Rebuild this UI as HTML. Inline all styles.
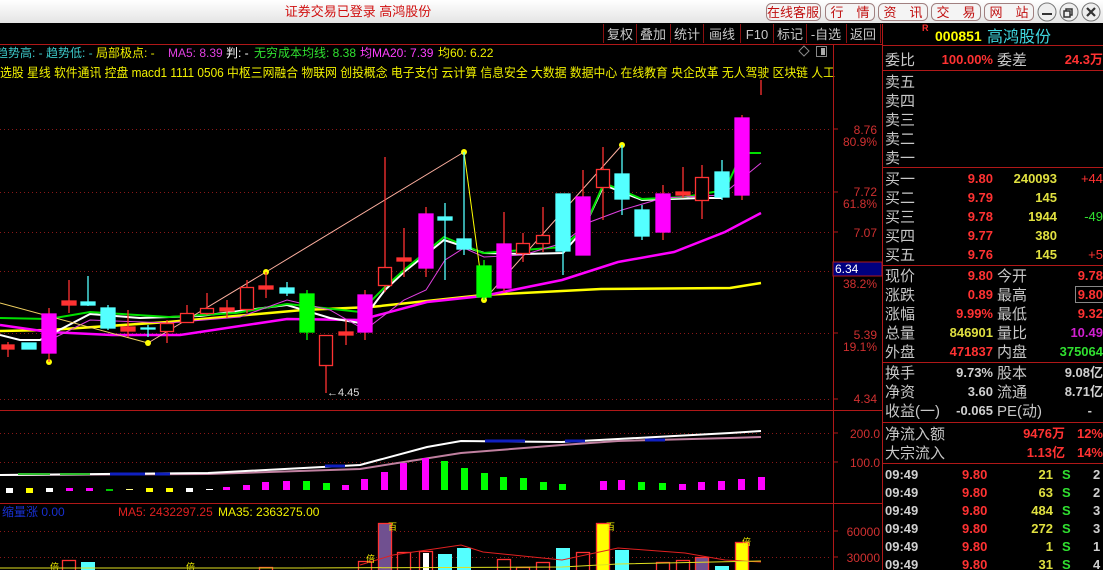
<!DOCTYPE html>
<html><head><meta charset="utf-8"><style>
html,body{margin:0;padding:0;background:#000;width:1103px;height:570px;overflow:hidden}
svg{display:block}
text{font-family:"Liberation Sans","Noto Sans CJK SC",sans-serif}
.cn{font-family:"Liberation Sans","Noto Sans CJK SC",sans-serif;font-size:15px}
.n{font-family:"Liberation Sans","Noto Sans CJK SC",sans-serif;font-size:13px;font-weight:bold}
</style></head><body>
<svg width="1103" height="570" viewBox="0 0 1103 570" xmlns="http://www.w3.org/2000/svg">
<defs>
<linearGradient id="tb" x1="0" y1="0" x2="0" y2="1"><stop offset="0" stop-color="#ffffff"/><stop offset="1" stop-color="#e4e4e4"/></linearGradient>
</defs>
<rect width="1103" height="570" fill="#000"/>
<!-- title bar -->
<rect x="0" y="0" width="1103" height="23" fill="url(#tb)"/>
<text x="358" y="16" text-anchor="middle" fill="#d01010" font-size="13">证券交易已登录 高鸿股份</text>
<g font-size="13" fill="#c01010" stroke-width="1">
<rect x="766.5" y="3.5" width="54" height="17" rx="5" fill="#f4f4f4" stroke="#a08080"/><text x="793" y="17" text-anchor="middle">在线客服</text>
<rect x="825.5" y="3.5" width="49" height="17" rx="5" fill="#f4f4f4" stroke="#a08080"/><text x="850" y="17" text-anchor="middle">行　情</text>
<rect x="878.5" y="3.5" width="49" height="17" rx="5" fill="#f4f4f4" stroke="#a08080"/><text x="903" y="17" text-anchor="middle">资　讯</text>
<rect x="931.5" y="3.5" width="49" height="17" rx="5" fill="#f4f4f4" stroke="#a08080"/><text x="956" y="17" text-anchor="middle">交　易</text>
<rect x="984.5" y="3.5" width="49" height="17" rx="5" fill="#f4f4f4" stroke="#a08080"/><text x="1009" y="17" text-anchor="middle">网　站</text>
</g>
<g fill="#eee" stroke="#777">
<circle cx="1047" cy="12" r="9"/><circle cx="1069" cy="12" r="9"/><circle cx="1091" cy="12" r="9"/>
</g>
<path d="M1042 14h10" stroke="#333" stroke-width="2"/>
<rect x="1066" y="9" width="6" height="6" fill="none" stroke="#333" stroke-width="1.5"/><rect x="1064" y="11" width="6" height="6" fill="#eee" stroke="#333" stroke-width="1.5"/>
<path d="M1087 8l8 8M1095 8l-8 8" stroke="#333" stroke-width="2.2"/>

<!-- toolbar -->
<g stroke="#8a1010" fill="none">
<path d="M603.5 24v19M636.5 24v19M670.5 24v19M703.5 24v19M740.5 24v19M773.5 24v19M806.5 24v19M846.5 24v19M880.5 24v19"/>
</g>
<g fill="#c8c8c8" font-size="13" text-anchor="middle">
<text x="620" y="39">复权</text><text x="653" y="39">叠加</text><text x="687" y="39">统计</text><text x="722" y="39">画线</text><text x="757" y="39">F10</text><text x="790" y="39">标记</text><text x="826" y="39">-自选</text><text x="863" y="39">返回</text>
</g>
<path d="M0 44.5H882" stroke="#b01818"/>
<!-- diamond/square icons -->
<path d="M804 46l5 5-5 5-5-5z" fill="none" stroke="#888"/>
<rect x="816.5" y="46.5" width="10" height="10" fill="none" stroke="#888"/><rect x="821" y="48" width="4" height="7" fill="#aaa"/>

<!-- indicator text -->
<g font-size="12">
<text x="-4" y="57" fill="#3cc8c8">趋势高: -</text>
<text x="46" y="57" fill="#3cc8c8">趋势低: -</text>
<text x="96" y="57" fill="#f0f000">局部极点: -</text>
<text x="168" y="57" fill="#e040e0">MA5: 8.39</text>
<text x="226" y="57" fill="#ffffff">判: -</text>
<text x="254" y="57" fill="#30e030">无穷成本均线: 8.38</text>
<text x="360" y="57" fill="#ff40ff">均MA20: 7.39</text>
<text x="438" y="57" fill="#f0f000">均60: 6.22</text>
</g>
<text x="0" y="77" fill="#f0f000" font-size="12.5" textLength="835" lengthAdjust="spacingAndGlyphs">选股 星线 软件通讯 控盘 macd1 1111 0506 中枢三网融合 物联网 创投概念 电子支付 云计算 信息安全 大数据 数据中心 在线教育 央企改革 无人驾驶 区块链 人工</text>

<!-- axis -->
<path d="M833.5 45V570M882.5 24V570" stroke="#b01818"/>
<g stroke="#8a1818" stroke-dasharray="1,3">
<path d="M0 129.5H832M0 192.5H832M0 232.5H832M0 271.5H832M0 333.5H832M0 399.5H832"/>
<path d="M0 433.5H832M0 462.5H832M0 531.5H832M0 557.5H832"/>
</g>
<path d="M0 410.5H882M0 503.5H882" stroke="#b01818"/>
<g stroke="#b01818"><path d="M833 129h5M833 192h5M833 232h5M833 333h5M833 399h5M833 433h5M833 462h5M833 531h5M833 557h5"/></g>
<g fill="#d03030" font-size="12" text-anchor="end">
<text x="877" y="134">8.76</text><text x="877" y="146">80.9%</text>
<text x="877" y="196">7.72</text><text x="877" y="208">61.8%</text>
<text x="877" y="237">7.07</text>
<text x="877" y="288">38.2%</text>
<text x="877" y="339">5.39</text><text x="877" y="351">19.1%</text>
<text x="877" y="403">4.34</text>
<text x="880" y="438">200.0</text><text x="880" y="467">100.0</text>
<text x="880" y="536">60000</text><text x="880" y="562">30000</text>
</g>
<rect x="833" y="262" width="49" height="14" fill="#000080" stroke="#b01818"/>
<text x="835" y="273" fill="#fff" font-size="12">6.34</text>

<!-- MA lines -->
<polyline fill="none" stroke="#ffff00" stroke-width="2.5" points="0,331 49,330 168,322 303,310 371,307 483,295 601,289 730,288 761,283"/>
<polyline fill="none" stroke="#ff00ff" stroke-width="2.5" points="0,325 49,332 112,335 180,335 287,319 360,320 427,302 483,296 562,280 618,262 674,252 725,232 761,213"/>
<polyline fill="none" stroke="#ffffff" stroke-width="2" points="0,335 20,340 40,340 90,314 140,318 200,316 287,305 330,318 360,323 385,290 404,272 444,240 484,253 523,254 563,253 583,230 604,185 642,200 702,198 722,198"/>
<polyline fill="none" stroke="#00e000" stroke-width="2" points="0,318 49,319 90,312 169,317 236,313 287,304 360,312 385,287 404,270 444,237 483,253 563,247 584,228 604,183 642,199 685,197 725,190 742,153 761,153"/>
<polyline fill="none" stroke="#e040e0" stroke-width="1" points="50,340 90,320 168,323 240,317 287,300 330,310 365,330 404,300 426,290 445,260 464,248 484,257 523,255 563,243 590,222 622,210 663,198 722,195 761,163"/>
<polyline fill="none" stroke="#f0d060" stroke-width="1" points="0,303 148,343"/>
<polyline fill="none" stroke="#ffb0a0" stroke-width="1" points="148,343 266,272 464,152"/>
<polyline fill="none" stroke="#ffff00" stroke-width="1" points="464,152 484,300"/>
<polyline fill="none" stroke="#ffb0a0" stroke-width="1" points="484,300 622,145"/>
<g fill="#ffff00"><circle cx="49" cy="362" r="3"/><circle cx="148" cy="343" r="3"/><circle cx="266" cy="272" r="3"/><circle cx="464" cy="152" r="3"/><circle cx="484" cy="300" r="3"/><circle cx="622" cy="145" r="3"/></g>

<!-- candles -->
<g stroke-width="1.3">
<g stroke="#ff3232">
<path d="M8 342V357M69 280V313M128 310V337M167 320V343M187 305V323M207 293V315M227 300V318M247 280V313M266 272V298M326 365V393M346 320V345M385 157V292M404 228V277M523 233V262M543 207V252M603 147V220M683 167V198M702 165V219M761 80V95"/>
<rect x="2" y="345" width="12" height="4" fill="#ff3232"/>
<rect x="62" y="301" width="14" height="4" fill="#ff3232"/>
<rect x="121" y="327" width="14" height="4" fill="#ff3232"/>
<rect x="160.5" y="323.5" width="13" height="8" fill="#000"/>
<rect x="180.5" y="313.5" width="13" height="9" fill="#000"/>
<rect x="200.5" y="308.5" width="13" height="5" fill="#000"/>
<rect x="220" y="308" width="14" height="3" fill="#ff3232"/>
<rect x="240.5" y="287.5" width="13" height="22" fill="#000"/>
<rect x="259" y="286" width="14" height="3" fill="#ff3232"/>
<rect x="319.5" y="335.5" width="13" height="30" fill="#000"/>
<rect x="339" y="332" width="14" height="3" fill="#ff3232"/>
<rect x="378.5" y="267.5" width="13" height="18" fill="#000"/>
<rect x="397" y="258" width="14" height="3" fill="#ff3232"/>
<rect x="516.5" y="243.5" width="13" height="10" fill="#000"/>
<rect x="536.5" y="235.5" width="13" height="8" fill="#000"/>
<rect x="596.5" y="169.5" width="13" height="18" fill="#000"/>
<rect x="676" y="192" width="14" height="3" fill="#ff3232"/>
<rect x="695.5" y="177.5" width="13" height="23" fill="#000"/>
</g>
<g stroke="#54ffff" fill="#54ffff">
<path d="M88 276V306M108 305V330M148 325V337M287 282V296M445 203V280M464 152V255M563 194V275M622 145V215M642 205V240M722 160V200"/>
<rect x="22" y="343" width="14" height="6"/>
<rect x="81" y="302" width="14" height="3"/>
<rect x="101" y="308" width="14" height="20"/>
<rect x="141" y="328" width="14" height="1"/>
<rect x="280" y="288" width="14" height="5"/>
<rect x="438" y="217" width="14" height="3"/>
<rect x="457" y="239" width="14" height="10"/>
<rect x="556" y="194" width="14" height="57"/>
<rect x="615" y="174" width="14" height="25"/>
<rect x="635" y="210" width="14" height="26"/>
<rect x="715" y="172" width="14" height="25"/>
</g>
<g stroke="#ff3232">
<path d="M49 308V362M365 290V340M426 207V277M504 212V292M583 170V255M663 185V240M742 115V200"/>
</g>
<g fill="#ff00ff" stroke="#ff00ff">
<rect x="42" y="314" width="14" height="39"/>
<rect x="358" y="295" width="14" height="37"/>
<rect x="419" y="214" width="14" height="54"/>
<rect x="497" y="244" width="14" height="44"/>
<rect x="576" y="197" width="14" height="58"/>
<rect x="656" y="194" width="14" height="38"/>
<rect x="735" y="118" width="14" height="77"/>
</g>
<g fill="#00ff00" stroke="#00ff00">
<path d="M307 290V340M484 260V300" />
<rect x="300" y="294" width="14" height="38"/>
<rect x="477" y="266" width="14" height="31"/>
</g>
</g>
<text x="327" y="396" fill="#ddd" font-size="11">←4.45</text>

<!-- MACD panel -->
<polyline fill="none" stroke="#c080a0" stroke-width="2" points="0,475 208,474 360,469 461,453 562,445 618,441 730,438 761,437"/>
<polyline fill="none" stroke="#ffffff" stroke-width="2" points="0,475 208,473 360,465 427,447 461,441 562,442 618,439 730,433 761,431"/>
<path d="M18 474H50M60 474H90" stroke="#30c030" stroke-width="2"/>
<path d="M110 474H145M155 474H170M325 466H345M485 441H525M565 441H585M645 440H665" stroke="#1020c0" stroke-width="3"/>
<g>
<rect x="6" y="488" width="7" height="5" fill="#fff"/><rect x="26" y="488" width="7" height="5" fill="#ff0"/><rect x="46" y="488" width="7" height="4" fill="#fff"/>
<rect x="66" y="488" width="7" height="3" fill="#f0f"/><rect x="86" y="488" width="7" height="3" fill="#f0f"/><rect x="106" y="489" width="7" height="2" fill="#0c0"/>
<rect x="126" y="489" width="7" height="1" fill="#ff8"/><rect x="146" y="488" width="7" height="4" fill="#ff0"/><rect x="166" y="488" width="7" height="4" fill="#ff0"/>
<rect x="186" y="488" width="7" height="4" fill="#fff"/><rect x="206" y="489" width="7" height="1" fill="#fff"/>
</g>
<g fill="#ff00ff">
<rect x="223" y="487" width="7" height="3"/><rect x="243" y="485" width="7" height="5"/><rect x="262" y="482" width="7" height="8"/><rect x="283" y="481" width="7" height="9"/>
<rect x="342" y="485" width="7" height="5"/><rect x="361" y="479" width="7" height="11"/><rect x="381" y="472" width="7" height="18"/><rect x="400" y="463" width="7" height="27"/><rect x="422" y="458" width="7" height="32"/>
<rect x="600" y="481" width="7" height="9"/><rect x="618" y="480" width="7" height="10"/><rect x="679" y="484" width="7" height="6"/><rect x="698" y="482" width="7" height="8"/><rect x="718" y="481" width="7" height="9"/><rect x="738" y="479" width="7" height="11"/><rect x="758" y="477" width="7" height="13"/>
</g>
<g fill="#00ff00">
<rect x="303" y="481" width="7" height="9"/><rect x="323" y="483" width="7" height="7"/>
<rect x="441" y="461" width="7" height="29"/><rect x="461" y="468" width="7" height="22"/><rect x="481" y="473" width="7" height="17"/><rect x="500" y="477" width="7" height="13"/><rect x="520" y="478" width="7" height="12"/><rect x="540" y="482" width="7" height="8"/><rect x="559" y="484" width="7" height="6"/><rect x="638" y="482" width="7" height="8"/><rect x="659" y="483" width="7" height="7"/>
</g>

<!-- volume panel -->
<text x="2" y="516" fill="#1830d0" font-size="12">缩量涨 0.00</text>
<text x="118" y="516" fill="#e02020" font-size="12">MA5: 2432297.25</text>
<text x="218" y="516" fill="#f0f000" font-size="12">MA35: 2363275.00</text>
<g stroke="#ff3232" stroke-width="1.3" fill="#000">
<rect x="62.5" y="560.5" width="13" height="12"/>
<rect x="259.5" y="567.5" width="13" height="10"/>
<rect x="358.5" y="561.5" width="13" height="12"/>
<rect x="378.5" y="523.5" width="13" height="50" fill="#705090"/>
<rect x="397.5" y="552.5" width="13" height="20"/>
<rect x="419.5" y="551.5" width="13" height="20"/>
<rect x="497.5" y="559.5" width="13" height="20"/>
<rect x="516.5" y="567.5" width="13" height="20"/>
<rect x="536.5" y="562.5" width="13" height="20"/>
<rect x="576.5" y="552.5" width="13" height="20"/>
<rect x="596.5" y="523.5" width="13" height="50" fill="#ffff00"/>
<rect x="656.5" y="562.5" width="13" height="20"/>
<rect x="676.5" y="560.5" width="13" height="20"/>
<rect x="695.5" y="557.5" width="13" height="20" fill="#705090"/>
<rect x="735.5" y="542.5" width="13" height="30" fill="#ffff00"/>
</g>
<rect x="423" y="553" width="6" height="20" fill="#fff"/>
<g fill="#54ffff">
<rect x="81" y="562" width="14" height="10"/><rect x="438" y="554" width="14" height="20"/><rect x="457" y="548" width="14" height="25"/><rect x="556" y="548" width="14" height="25"/><rect x="615" y="550" width="14" height="25"/><rect x="715" y="566" width="14" height="10"/>
</g>
<polyline fill="none" stroke="#e02020" stroke-width="1" points="360,565 393,555 461,545 483,552 562,560 618,548 685,553 725,560 761,562"/>
<polyline fill="none" stroke="#e0e020" stroke-width="1" points="0,568 300,568 562,567 618,564 761,561"/>
<g fill="#f0f000" font-size="9"><text x="388" y="530">百</text><text x="606" y="530">百</text><text x="742" y="545">倍</text><text x="366" y="562">倍</text><text x="50" y="570">倍</text><text x="186" y="570">倍</text></g>

<!-- right panel -->
<text x="922" y="31" fill="#ff3030" font-size="9" font-weight="bold">R</text>
<text x="935" y="41" fill="#ffff00" font-size="14" font-weight="bold">000851</text>
<text x="987" y="42" fill="#40d8e0" font-size="16">高鸿股份</text>
<g stroke="#b01818"><path d="M882 45.5H1103M882 70.5H1103M882 167.5H1103M882 265.5H1103M882 362.5H1103M882 422.5H1103M882 463.5H1103"/></g>
<g class="cn" fill="#c8c8c8">
<text x="885" y="65">委比</text><text x="997" y="65">委差</text>
<text x="885" y="87">卖五</text><text x="885" y="106">卖四</text><text x="885" y="125">卖三</text><text x="885" y="144">卖二</text><text x="885" y="163">卖一</text>
<text x="885" y="184">买一</text><text x="885" y="203">买二</text><text x="885" y="222">买三</text><text x="885" y="241">买四</text><text x="885" y="260">买五</text>
<text x="885" y="281">现价</text><text x="997" y="281">今开</text>
<text x="885" y="300">涨跌</text><text x="997" y="300">最高</text>
<text x="885" y="319">涨幅</text><text x="997" y="319">最低</text>
<text x="885" y="338">总量</text><text x="997" y="338">量比</text>
<text x="885" y="357">外盘</text><text x="997" y="357">内盘</text>
<text x="885" y="378">换手</text><text x="997" y="378">股本</text>
<text x="885" y="397">净资</text><text x="997" y="397">流通</text>
<text x="885" y="416">收益(一)</text><text x="997" y="416">PE(动)</text>
<text x="885" y="439">净流入额</text><text x="885" y="458">大宗流入</text>
</g>
<g class="n" text-anchor="end">
<text x="993" y="64" fill="#ff3232">100.00%</text><text x="1103" y="64" fill="#ff3232">24.3万</text>
<text x="993" y="183" fill="#ff3232">9.80</text><text x="1057" y="183" fill="#e0e040">240093</text><text x="1103" y="183" fill="#ff3232" font-weight="normal">+44</text>
<text x="993" y="202" fill="#ff3232">9.79</text><text x="1057" y="202" fill="#e0e040">145</text>
<text x="993" y="221" fill="#ff3232">9.78</text><text x="1057" y="221" fill="#e0e040">1944</text><text x="1103" y="221" fill="#30e030" font-weight="normal">-49</text>
<text x="993" y="240" fill="#ff3232">9.77</text><text x="1057" y="240" fill="#e0e040">380</text>
<text x="993" y="259" fill="#ff3232">9.76</text><text x="1057" y="259" fill="#e0e040">145</text><text x="1103" y="259" fill="#ff3232" font-weight="normal">+5</text>
<text x="993" y="280" fill="#ff3232">9.80</text><text x="1103" y="280" fill="#ff3232">9.78</text>
<text x="993" y="299" fill="#ff3232">0.89</text><text x="1103" y="299" fill="#ff3232">9.80</text>
<text x="993" y="318" fill="#ff3232">9.99%</text><text x="1103" y="318" fill="#ff3232">9.32</text>
<text x="993" y="337" fill="#e0e040">846901</text><text x="1103" y="337" fill="#d020d0">10.49</text>
<text x="993" y="356" fill="#ff3232">471837</text><text x="1103" y="356" fill="#30e030">375064</text>
<text x="993" y="377" fill="#d0d0d0">9.73%</text><text x="1103" y="377" fill="#d0d0d0">9.08亿</text>
<text x="993" y="396" fill="#d0d0d0">3.60</text><text x="1103" y="396" fill="#d0d0d0">8.71亿</text>
<text x="993" y="415" fill="#d0d0d0">-0.065</text><text x="1092" y="415" fill="#d0d0d0">-</text>
<text x="1065" y="438" fill="#ff3232">9476万</text><text x="1103" y="438" fill="#ff3232">12%</text>
<text x="1065" y="457" fill="#ff3232">1.13亿</text><text x="1103" y="457" fill="#ff3232">14%</text>
</g>
<rect x="1075.5" y="286.5" width="28" height="16" fill="none" stroke="#888"/>
<g class="n">
<text x="885" y="479" fill="#d0d0d0">09:49</text><text x="962" y="479" fill="#ff3232">9.80</text><text x="1053" y="479" fill="#e0e040" text-anchor="end">21</text><text x="1062" y="479" fill="#30e030">S</text><text x="1093" y="479" fill="#d0d0d0">2</text>
<text x="885" y="497" fill="#d0d0d0">09:49</text><text x="962" y="497" fill="#ff3232">9.80</text><text x="1053" y="497" fill="#e0e040" text-anchor="end">63</text><text x="1062" y="497" fill="#30e030">S</text><text x="1093" y="497" fill="#d0d0d0">2</text>
<text x="885" y="515" fill="#d0d0d0">09:49</text><text x="962" y="515" fill="#ff3232">9.80</text><text x="1053" y="515" fill="#e0e040" text-anchor="end">484</text><text x="1062" y="515" fill="#30e030">S</text><text x="1093" y="515" fill="#d0d0d0">3</text>
<text x="885" y="533" fill="#d0d0d0">09:49</text><text x="962" y="533" fill="#ff3232">9.80</text><text x="1053" y="533" fill="#e0e040" text-anchor="end">272</text><text x="1062" y="533" fill="#30e030">S</text><text x="1093" y="533" fill="#d0d0d0">3</text>
<text x="885" y="551" fill="#d0d0d0">09:49</text><text x="962" y="551" fill="#ff3232">9.80</text><text x="1053" y="551" fill="#e0e040" text-anchor="end">1</text><text x="1062" y="551" fill="#30e030">S</text><text x="1093" y="551" fill="#d0d0d0">1</text>
<text x="885" y="569" fill="#d0d0d0">09:49</text><text x="962" y="569" fill="#ff3232">9.80</text><text x="1053" y="569" fill="#e0e040" text-anchor="end">31</text><text x="1062" y="569" fill="#30e030">S</text><text x="1093" y="569" fill="#d0d0d0">4</text>
</g>
</svg>
</body></html>
